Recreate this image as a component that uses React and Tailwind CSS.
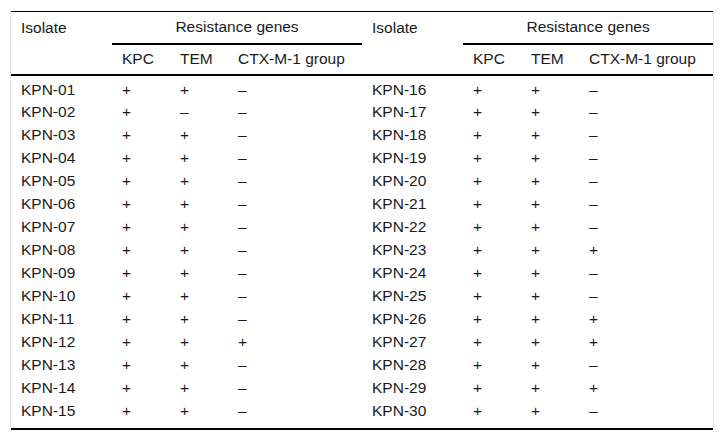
const left = [
    ["KPN-01", "+", "+", "–"],
    ["KPN-02", "+", "–", "–"],
    ["KPN-03", "+", "+", "–"],
    ["KPN-04", "+", "+", "–"],
    ["KPN-05", "+", "+", "–"],
    ["KPN-06", "+", "+", "–"],
    ["KPN-07", "+", "+", "–"],
    ["KPN-08", "+", "+", "–"],
    ["KPN-09", "+", "+", "–"],
    ["KPN-10", "+", "+", "–"],
    ["KPN-11", "+", "+", "–"],
    ["KPN-12", "+", "+", "+"],
    ["KPN-13", "+", "+", "–"],
    ["KPN-14", "+", "+", "–"],
    ["KPN-15", "+", "+", "–"],
];

const right = [
    ["KPN-16", "+", "+", "–"],
    ["KPN-17", "+", "+", "–"],
    ["KPN-18", "+", "+", "–"],
    ["KPN-19", "+", "+", "–"],
    ["KPN-20", "+", "+", "–"],
    ["KPN-21", "+", "+", "–"],
    ["KPN-22", "+", "+", "–"],
    ["KPN-23", "+", "+", "+"],
    ["KPN-24", "+", "+", "–"],
    ["KPN-25", "+", "+", "–"],
    ["KPN-26", "+", "+", "+"],
    ["KPN-27", "+", "+", "+"],
    ["KPN-28", "+", "+", "–"],
    ["KPN-29", "+", "+", "+"],
    ["KPN-30", "+", "+", "–"],
];

const App = () => {
    const cell = "pl-[10px] pr-0 py-0 text-left font-normal align-middle";
    return (
        <div className="bg-white w-[724px] h-[440px] pt-[11px] px-[10px] font-['Liberation_Sans',Arial,sans-serif] text-[15.5px] leading-[20px] text-[#1a1a1a]">
            <div className="border-x border-[#e6e6e6] pb-[5px]">
                <table className="w-[702px] table-fixed border-collapse border-t border-black">
                    <colgroup>
                        <col className="w-[101px]"/>
                        <col className="w-[58px]"/>
                        <col className="w-[58px]"/>
                        <col className="w-[134px]"/>
                        <col className="w-[101px]"/>
                        <col className="w-[58px]"/>
                        <col className="w-[58px]"/>
                        <col className="w-[134px]"/>
                    </colgroup>
                    <thead>
                        <tr className="h-[32px]">
                            <th className={cell}>Isolate</th>
                            <th colSpan={3} className="font-normal text-center border-b-2 border-black">Resistance genes</th>
                            <th className={cell}>Isolate</th>
                            <th colSpan={3} className="font-normal text-center border-b-2 border-black">Resistance genes</th>
                        </tr>
                        <tr className="h-[31px] border-b-2 border-black">
                            <th className={cell}></th>
                            <th className={cell}>KPC</th>
                            <th className={cell}>TEM</th>
                            <th className={cell}>CTX-M-1 group</th>
                            <th className={cell}></th>
                            <th className={cell}>KPC</th>
                            <th className={cell}>TEM</th>
                            <th className={cell}>CTX-M-1 group</th>
                        </tr>
                    </thead>
                    <tbody>
                        {left.map((row, i) => (
                            <tr key={row[0]} className={i === 0 ? "h-[26px]" : "h-[23px]"}>
                                {row.concat(right[i]).map((v, j) => (
                                    <td key={j} className={`${cell} ${i === 0 ? "pt-[3px]" : ""}`}>{v}</td>
                                ))}
                            </tr>
                        ))}
                    </tbody>
                </table>
            </div>
            <div className="h-[2px] bg-black w-[702px] ml-px"></div>
        </div>
    );
};

export default App;
